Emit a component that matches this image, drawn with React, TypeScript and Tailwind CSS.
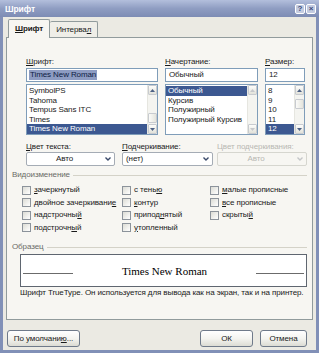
import React from "react";

const ui = "font-['Liberation_Sans','DejaVu_Sans',sans-serif] text-[8px] tracking-[-0.1px] leading-[10px] text-[#1a1a1a]";

function Arrow({ up, dim }: { up?: boolean; dim?: boolean }) {
  return (
    <svg width="5" height="3" viewBox="0 0 5 3">
      <path d={up ? "M0 3 L2.5 0 L5 3 Z" : "M0 0 L2.5 3 L5 0 Z"} fill={dim ? "#c6c8cc" : "#4d6185"} />
    </svg>
  );
}

function ScrollBar({ thumbTop, disabled }: { thumbTop?: number; disabled?: boolean }) {
  return (
    <div className="flex flex-col w-[10px] h-full bg-[#f4f4f0] border-l border-[#e6e6e0]">
      <div className="h-[10px] flex items-center justify-center bg-linear-to-b from-[#fdfdfb] to-[#e2e2da] border border-[#c8cbd0] rounded-[1px]">
        <Arrow up dim={disabled} />
      </div>
      <div className="flex-1 flex flex-col">
        {!disabled && thumbTop !== undefined && (
          <div
            className="h-[10px] bg-linear-to-r from-[#fbfbf9] to-[#e4e4dc] border border-[#c8cbd0] rounded-[1px]"
            style={{ marginTop: thumbTop }}
          />
        )}
      </div>
      <div className="h-[10px] flex items-center justify-center bg-linear-to-b from-[#fdfdfb] to-[#e2e2da] border border-[#c8cbd0] rounded-[1px]">
        <Arrow dim={disabled} />
      </div>
    </div>
  );
}

function ListBox({
  items,
  selected,
  width,
  thumbTop,
  disabled,
}: {
  items: string[];
  selected: number;
  width: string;
  thumbTop?: number;
  disabled?: boolean;
}) {
  return (
    <div className={`${width} h-[51px] mt-[2px] flex bg-white border border-[#7f9db9]`}>
      <div className="flex-1 flex flex-col pt-[1px]">
        {items.map((it, i) => (
          <div
            key={it}
            className={`h-[9.6px] leading-[9.6px] pl-[2px] whitespace-nowrap ${
              i === selected ? "bg-[#3c5891] text-white" : ""
            }`}
          >
            {it}
          </div>
        ))}
      </div>
      <ScrollBar thumbTop={thumbTop} disabled={disabled} />
    </div>
  );
}

function Input({ value, width, selected }: { value: string; width: string; selected?: boolean }) {
  return (
    <div className={`${width} h-[14px] mt-[1px] flex items-center pl-[2px] bg-white border border-[#7f9db9]`}>
      <span className={selected ? "bg-[#8d9cc2] text-[#0f1d44] px-[1px]" : "px-[1px]"}>{value}</span>
    </div>
  );
}

function Chevron({ dim }: { dim?: boolean }) {
  return (
    <svg width="6" height="4" viewBox="0 0 6 4">
      <path d="M0.5 0.5 L3 3 L5.5 0.5" fill="none" stroke={dim ? "#c4c6c8" : "#3a4a6a"} strokeWidth="1.4" />
    </svg>
  );
}

function Combo({
  value,
  width,
  center,
  disabled,
}: {
  value: string;
  width: string;
  center?: boolean;
  disabled?: boolean;
}) {
  return (
    <div
      className={`${width} h-[14px] flex items-center rounded-[2px] border ${
        disabled ? "border-[#d6d6cf] bg-[#f7f6f2] text-[#b8b8b2]" : "border-[#a5acb5] bg-white"
      }`}
    >
      <span className={`flex-1 ${center ? "text-center" : "pl-[3px]"}`}>{value}</span>
      <span className="w-[12px] flex justify-center">
        <Chevron dim={disabled} />
      </span>
    </div>
  );
}

function Check({ children }: { children: React.ReactNode }) {
  return (
    <div className="h-[12.5px] flex items-center gap-[3px] whitespace-nowrap">
      <span className="w-[9px] h-[9px] shrink-0 border border-[#8c939b] bg-linear-to-br from-[#dcdcd5] to-white" />
      <span>{children}</span>
    </div>
  );
}

function GroupLabel({ children }: { children: React.ReactNode }) {
  return (
    <div className="flex items-center ml-[5px] mr-[5px] text-[#6a6a66]">
      <span className="pr-[3px]">{children}</span>
      <div className="flex-1 h-px bg-[#d4d2c8]" />
    </div>
  );
}

function Button({ children, width }: { children: React.ReactNode; width: string }) {
  return (
    <div
      className={`${width} h-[17px] flex items-center justify-center rounded-[3px] border border-[#6f7a8a] bg-linear-to-b from-white via-[#f4f4f0] to-[#dcdcd4]`}
    >
      {children}
    </div>
  );
}

export default function App() {
  return (
    <div className={`${ui} w-[319px] h-[353px] flex flex-col bg-[#8190b7]`}>
      {/* title bar */}
      <div className="h-[17px] flex items-center bg-linear-to-b from-[#b3bfdc] via-[#8f9dc2] to-[#7d8cb4] pl-[5px] pr-[3px]">
        <span className="flex-1 text-white font-bold text-[8.5px]">Шрифт</span>
        <div className="flex gap-px">
          <div className="w-[10px] h-[10px] rounded-[2px] border border-white bg-[#c3cbe0] text-[#3a4a78] text-[8px] leading-[8px] font-bold flex items-center justify-center">
            ?
          </div>
          <div className="w-[10px] h-[10px] rounded-[2px] border border-white bg-[#c3cbe0] text-[#3a4a78] text-[8px] leading-[8px] font-bold flex items-center justify-center">
            ×
          </div>
        </div>
      </div>

      {/* body */}
      <div className="flex-1 flex flex-col mx-[3px] mb-[3px] bg-[#ebeae3]">
        {/* tabs */}
        <div className="flex items-end ml-[5px] mt-[2px] h-[18px]">
          <div className="relative z-10 h-[19px] -mb-px px-[6px] flex items-center border border-b-0 border-[#919b9c] rounded-t-[2px] bg-[#f7f6f2] font-bold">
            <u>Ш</u>рифт
          </div>
          <div className="h-[16px] px-[6px] flex items-center border border-l-0 border-b-0 border-[#919b9c] rounded-t-[2px] bg-[#efeee8]">
            Интерва<u>л</u>
          </div>
        </div>

        {/* panel */}
        <div className="ml-[3px] w-[307px] h-[283px] border border-[#919b9c] bg-[#f7f6f2] flex flex-col">
          {/* font / style / size */}
          <div className="flex mt-[19px] ml-[19px] gap-[7px]">
            <div className="flex flex-col">
              <div>
                <u>Ш</u>рифт:
              </div>
              <Input value="Times New Roman" width="w-[132px]" selected />
              <ListBox
                items={["SymbolPS", "Tahoma", "Tempus Sans ITC", "Times", "Times New Roman"]}
                selected={4}
                width="w-[132px]"
                thumbTop={18}
              />
            </div>
            <div className="flex flex-col">
              <div>
                <u>Н</u>ачертание:
              </div>
              <Input value="Обычный" width="w-[93px]" />
              <ListBox
                items={["Обычный", "Курсив", "Полужирный", "Полужирный Курсив"]}
                selected={0}
                width="w-[93px]"
                disabled
              />
            </div>
            <div className="flex flex-col">
              <div>
                <u>Р</u>азмер:
              </div>
              <Input value="12" width="w-[40px]" />
              <ListBox items={["8", "9", "10", "11", "12"]} selected={4} width="w-[40px]" thumbTop={4} />
            </div>
          </div>

          {/* color / underline */}
          <div className="flex mt-[7px] ml-[19px] gap-[7px]">
            <div className="flex flex-col">
              <div>
                <u>Ц</u>вет текста:
              </div>
              <Combo value="Авто" width="w-[89px]" center />
            </div>
            <div className="flex flex-col">
              <div>
                <u>П</u>одчеркивание:
              </div>
              <Combo value="(нет)" width="w-[91px]" />
            </div>
            <div className="flex flex-col ml-[-3px]">
              <div className="text-[#b8b8b2] whitespace-nowrap">Цвет подчеркивания:</div>
              <Combo value="Авто" width="w-[90px]" center disabled />
            </div>
          </div>

          {/* effects */}
          <div className="mt-[4px]">
            <GroupLabel>Видоизменение</GroupLabel>
          </div>
          <div className="grid grid-cols-[100px_88px_1fr] ml-[15px] mt-[4px]">
            <div className="flex flex-col">
              <Check>
                <u>з</u>ачеркнутый
              </Check>
              <Check>
                двойное зачеркивани<u>е</u>
              </Check>
              <Check>
                надстрочны<u>й</u>
              </Check>
              <Check>
                подстрочн<u>ы</u>й
              </Check>
            </div>
            <div className="flex flex-col">
              <Check>
                с тень<u>ю</u>
              </Check>
              <Check>
                <u>к</u>онтур
              </Check>
              <Check>
                припод<u>н</u>ятый
              </Check>
              <Check>
                <u>у</u>топленный
              </Check>
            </div>
            <div className="flex flex-col">
              <Check>
                <u>м</u>алые прописные
              </Check>
              <Check>
                <u>в</u>се прописные
              </Check>
              <Check>
                скрыты<u>й</u>
              </Check>
            </div>
          </div>

          {/* preview */}
          <div className="mt-[8px]">
            <GroupLabel>Образец</GroupLabel>
          </div>
          <div className="ml-[13px] mt-[2px] w-[287px] h-[33px] flex items-center px-[2px] bg-white border border-[#5f6670]">
            <div className="w-[50px] h-px mt-[5px] bg-[#6b6b6b]" />
            <div className="flex-1 text-center font-['Liberation_Serif',serif] text-[11px] tracking-normal leading-[12px] text-black">
              Times New Roman
            </div>
            <div className="w-[48px] h-px mt-[5px] bg-[#6b6b6b]" />
          </div>
          <div className="ml-[13px] mt-[1px] whitespace-nowrap">
            Шрифт TrueType. Он используется для вывода как на экран, так и на принтер.
          </div>
        </div>

        {/* buttons */}
        <div className="flex mt-[10px] ml-[4px] mr-[9px]">
          <Button width="w-[73px]">
            По умолчани<u>ю</u>...
          </Button>
          <div className="flex-1" />
          <Button width="w-[53px]">ОК</Button>
          <div className="w-[7px]" />
          <Button width="w-[47px]">Отмена</Button>
        </div>
      </div>
    </div>
  );
}
